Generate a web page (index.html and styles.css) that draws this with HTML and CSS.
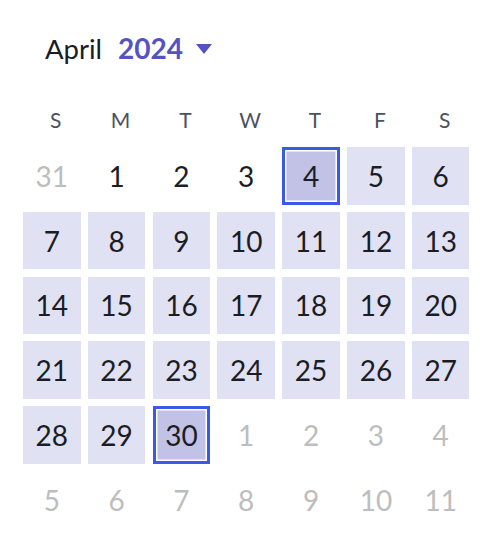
FILE: index.html
```html
<!DOCTYPE html>
<html>
<head>
<meta charset="utf-8">
<link rel="stylesheet" href="styles.css">
</head>
<body>
<div class="calendar">
  <div class="title">
    <span class="month">April</span>
    <span class="year">2024</span>
    <svg class="caret" width="16" height="10" viewBox="0 0 16 10"><path d="M0 0H16L8 10Z" fill="#5552c4"/></svg>
  </div>
  <div class="grid weekdays">
    <div class="wd">S</div><div class="wd">M</div><div class="wd">T</div><div class="wd">W</div><div class="wd">T</div><div class="wd">F</div><div class="wd">S</div>
  </div>
  <div class="grid days">
    <div class="day out">31</div>
    <div class="day">1</div>
    <div class="day">2</div>
    <div class="day">3</div>
    <div class="day hl sel">4</div>
    <div class="day hl">5</div>
    <div class="day hl">6</div>
    <div class="day hl">7</div>
    <div class="day hl">8</div>
    <div class="day hl">9</div>
    <div class="day hl">10</div>
    <div class="day hl">11</div>
    <div class="day hl">12</div>
    <div class="day hl">13</div>
    <div class="day hl">14</div>
    <div class="day hl">15</div>
    <div class="day hl">16</div>
    <div class="day hl">17</div>
    <div class="day hl">18</div>
    <div class="day hl">19</div>
    <div class="day hl">20</div>
    <div class="day hl">21</div>
    <div class="day hl">22</div>
    <div class="day hl">23</div>
    <div class="day hl">24</div>
    <div class="day hl">25</div>
    <div class="day hl">26</div>
    <div class="day hl">27</div>
    <div class="day hl">28</div>
    <div class="day hl">29</div>
    <div class="day hl sel">30</div>
    <div class="day out">1</div>
    <div class="day out">2</div>
    <div class="day out">3</div>
    <div class="day out">4</div>
    <div class="day out">5</div>
    <div class="day out">6</div>
    <div class="day out">7</div>
    <div class="day out">8</div>
    <div class="day out">9</div>
    <div class="day out">10</div>
    <div class="day out">11</div>
  </div>
</div>
</body>
</html>
```
FILE: styles.css
```css
html, body {
  margin: 0;
  padding: 0;
  background: #ffffff;
}
body {
  font-family: Lato, "Noto Sans", sans-serif;
  color: #1b1d24;
}
.calendar {
  padding: 30px 0 0 23px;
}
.title {
  display: flex;
  align-items: center;
  padding-left: 22px;
  height: 36px;
  font-size: 27.5px;
}
.month {
  color: #1b1d24;
}
.year {
  margin-left: 16px;
  font-size: 28px;
  font-weight: 700;
  color: #5552c4;
}
.caret {
  margin-left: 13px;
  margin-top: 2px;
}
.grid {
  display: grid;
  grid-template-columns: repeat(7, 57.5px);
  column-gap: 7.33px;
  row-gap: 7.33px;
}
.weekdays {
  margin-top: 25px;
  height: 56px;
  align-items: center;
}
.wd {
  text-align: center;
  padding-left: 8px;
  font-size: 21px;
  color: #4b5162;
}
.day {
  box-sizing: border-box;
  height: 57.5px;
  display: flex;
  align-items: center;
  justify-content: center;
  font-size: 28px;
  color: #1b1d24;
}
.day.hl {
  background: #e1e1f4;
}
.day.sel {
  background: #c2c2e7;
  border: 3px solid #3a5ae6;
  box-shadow: inset 0 0 0 1.5px #ffffff;
}
.day.out {
  color: #bdbdbd;
}
```
